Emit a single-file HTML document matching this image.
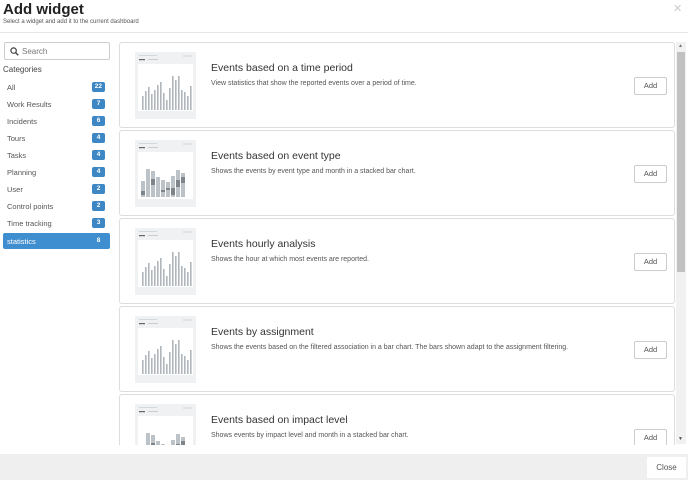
<!DOCTYPE html>
<html><head><meta charset="utf-8"><style>
*{box-sizing:border-box;margin:0;padding:0}
body{width:688px;height:480px;overflow:hidden;background:#fff;font-family:"Liberation Sans",sans-serif;position:relative;color:#333}
.abs{position:absolute}
h1{position:absolute;left:3px;top:1px;font-size:15px;font-weight:bold;color:#222}
.sub{left:3px;top:19px;font-size:6px;color:#555}
.hline{left:0;top:32px;width:688px;height:1px;background:#e6e6e6}
.x{left:673px;top:2px;font-size:11px;color:#ccc}
.search{left:4px;top:42px;width:106px;height:18px;border:1px solid #ccc;border-radius:2px;font-size:8px;color:#777;padding:4px 0 0 17px}
.cat{left:3px;top:65px;font-size:8px;color:#444}
.row{left:3px;width:107px;height:16px;font-size:7.5px;color:#555;padding:4px 0 0 4px}
.row b{position:absolute;right:5px;top:3px;background:#3c87c4;color:#fff;font-size:6.5px;border-radius:2px;padding:1px 3px;min-width:13px;height:10px;text-align:center;font-weight:bold}
.row.sel{background:#3f8ed0;color:#fff;border-radius:2px}
.row.sel b{background:none}
.card{left:119px;width:556px;height:86px;border:1px solid #ddd;border-radius:3px;background:#fff}
.thumb{position:absolute;left:15px;top:9px;width:61px;height:67px;background:#f0f1f2}
.title{position:absolute;left:91px;top:19px;font-size:10.5px;color:#333}
.desc{position:absolute;left:91px;top:37px;font-size:7px;color:#555;white-space:nowrap}
.add{position:absolute;left:514px;top:34px;width:33px;height:18px;border:1px solid #ccc;border-radius:2px;font-size:7.5px;color:#555;text-align:center;line-height:16px;background:#fff}
.clip{left:0;top:42px;width:688px;height:403px;overflow:hidden}
.foot{left:0;top:454px;width:688px;height:26px;background:#efefef}
.close{left:647px;top:457px;width:39px;height:21px;background:#fff;font-size:8px;color:#555;text-align:center;line-height:21px}
.sb{left:676px;top:42px;width:10px;height:402px;background:#f1f1f1}
.th{left:677px;top:52px;width:8px;height:220px;background:#c1c1c1}
</style></head><body>
<h1>Add widget</h1>
<div class="abs sub">Select a widget and add it to the current dashboard</div>
<div class="abs x">✕</div>
<div class="abs hline"></div>
<div class="abs search"><svg class="abs" style="left:5px;top:4px" width="9" height="9" viewBox="0 0 9 9"><circle cx="3.6" cy="3.6" r="2.7" stroke="#444" stroke-width="1.2" fill="none"/><path d="M5.6 5.6L8.3 8.3" stroke="#444" stroke-width="1.4"/></svg>Search</div>
<div class="abs cat">Categories</div>
<div class="abs row" style="top:79px">All<b>22</b></div>
<div class="abs row" style="top:96px">Work Results<b>7</b></div>
<div class="abs row" style="top:113px">Incidents<b>6</b></div>
<div class="abs row" style="top:130px">Tours<b>4</b></div>
<div class="abs row" style="top:147px">Tasks<b>4</b></div>
<div class="abs row" style="top:164px">Planning<b>4</b></div>
<div class="abs row" style="top:181px">User<b>2</b></div>
<div class="abs row" style="top:198px">Control points<b>2</b></div>
<div class="abs row" style="top:215px">Time tracking<b>3</b></div>
<div class="abs row sel" style="top:233px">statistics<b>8</b></div>

<div class="abs clip">
<svg width="0" height="0" style="position:absolute"><defs>
<g id="bars"><rect x="0" y="0" width="61" height="67" fill="#f0f1f2"/><rect x="4" y="3" width="18" height="1" fill="#d5d8db"/><rect x="48" y="3" width="9" height="2" fill="#e0e2e4"/><rect x="4" y="7" width="6" height="1.2" fill="#666"/><rect x="13" y="7" width="10" height="1" fill="#ccc"/><rect x="3" y="12" width="55" height="47" fill="#fff"/>
<g fill="#b0b6bb">
<rect x="7" y="44" width="1.6" height="14"/><rect x="10" y="39" width="1.6" height="19"/><rect x="13" y="35" width="1.6" height="23"/><rect x="16" y="42" width="1.6" height="16"/><rect x="19" y="38" width="1.6" height="20"/><rect x="22" y="33" width="1.6" height="25"/><rect x="25" y="30" width="1.6" height="28"/><rect x="28" y="41" width="1.6" height="17"/><rect x="31" y="48" width="1.6" height="10"/><rect x="34" y="36" width="1.6" height="22"/><rect x="37" y="24" width="1.6" height="34"/><rect x="40" y="28" width="1.6" height="30"/><rect x="43" y="24" width="1.6" height="34"/><rect x="46" y="38" width="1.6" height="20"/><rect x="49" y="40" width="1.6" height="18"/><rect x="52" y="44" width="1.6" height="14"/><rect x="55" y="34" width="1.6" height="24"/></g></g>
<g id="stk"><rect x="0" y="0" width="61" height="67" fill="#f0f1f2"/><rect x="4" y="3" width="18" height="1" fill="#d5d8db"/><rect x="48" y="3" width="9" height="2" fill="#e0e2e4"/><rect x="4" y="7" width="6" height="1.2" fill="#666"/><rect x="13" y="7" width="10" height="1" fill="#ccc"/><rect x="3" y="12" width="55" height="47" fill="#fff"/>
<g fill="#bcc3c8"><rect x="6" y="41" width="4" height="16"/><rect x="11" y="29" width="4" height="28"/><rect x="16" y="31" width="4" height="26"/><rect x="21" y="37" width="4" height="20"/><rect x="26" y="40" width="4" height="17"/><rect x="31" y="42" width="4" height="15"/><rect x="36" y="36" width="4" height="21"/><rect x="41" y="30" width="4" height="27"/><rect x="46" y="33" width="4" height="24"/></g>
<g fill="#7d858b"><rect x="6" y="51" width="4" height="4"/><rect x="16" y="39" width="4" height="6"/><rect x="26" y="50" width="4" height="2"/><rect x="31" y="48" width="4" height="2"/><rect x="41" y="40" width="4" height="7"/><rect x="36" y="48" width="4" height="7"/><rect x="46" y="37" width="4" height="6"/></g></g>
</defs></svg>
<div class="abs card" style="top:0"><svg class="thumb" width="61" height="67"><use href="#bars"/></svg><div class="title">Events based on a time period</div><div class="desc">View statistics that show the reported events over a period of time.</div><div class="add">Add</div></div>
<div class="abs card" style="top:88px"><svg class="thumb" width="61" height="67"><use href="#stk"/></svg><div class="title">Events based on event type</div><div class="desc">Shows the events by event type and month in a stacked bar chart.</div><div class="add">Add</div></div>
<div class="abs card" style="top:176px"><svg class="thumb" width="61" height="67"><use href="#bars"/></svg><div class="title">Events hourly analysis</div><div class="desc">Shows the hour at which most events are reported.</div><div class="add">Add</div></div>
<div class="abs card" style="top:264px"><svg class="thumb" width="61" height="67"><use href="#bars"/></svg><div class="title">Events by assignment</div><div class="desc">Shows the events based on the filtered association in a bar chart. The bars shown adapt to the assignment filtering.</div><div class="add">Add</div></div>
<div class="abs card" style="top:352px"><svg class="thumb" width="61" height="67"><use href="#stk"/></svg><div class="title">Events based on impact level</div><div class="desc">Shows events by impact level and month in a stacked bar chart.</div><div class="add">Add</div></div>
</div>
<div class="abs sb"></div><div class="abs th"></div>
<div class="abs" style="left:678px;top:43px;font-size:5px;color:#777">▲</div>
<div class="abs" style="left:678px;top:436px;font-size:5px;color:#555">▼</div>
<div class="abs foot"></div>
<div class="abs close">Close</div>
</body></html>
